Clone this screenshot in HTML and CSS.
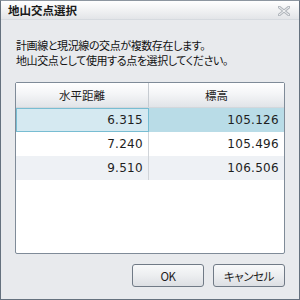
FILE: index.html
```html
<!DOCTYPE html>
<html lang="ja">

<head>
    <meta charset="UTF-8">
    <title>地山交点選択</title>
    <link rel="stylesheet" href="styles.css">
</head>

<body>
    <div class="window">
        <div class="titlebar">
            <span class="title">地山交点選択</span>
            <svg class="close" width="12" height="10" viewBox="0 0 12 10">
                <path d="M1 1 L11 9 M11 1 L1 9" stroke="#b3b8be" stroke-width="3" stroke-linecap="square" />
                <path d="M1 1 L11 9 M11 1 L1 9" stroke="#f4f5f6" stroke-width="1" />
            </svg>
        </div>

        <div class="content">
            <div class="message">
                <div class="line">計画線と現況線の交点が複数存在します。</div>
                <div class="line">地山交点として使用する点を選択してください。</div>
            </div>

            <div class="grid">
                <div class="row head">
                    <div class="cell">水平距離</div>
                    <div class="cell">標高</div>
                </div>
                <div class="row selected">
                    <div class="cell focus">6.315</div>
                    <div class="cell">105.126</div>
                </div>
                <div class="row">
                    <div class="cell">7.240</div>
                    <div class="cell">105.496</div>
                </div>
                <div class="row alt">
                    <div class="cell">9.510</div>
                    <div class="cell">106.506</div>
                </div>
            </div>

            <div class="buttons">
                <button class="btn">OK</button>
                <button class="btn">キャンセル</button>
            </div>
        </div>
    </div>
</body>

</html>
```

FILE: styles.css
```css
body {
    margin: 0;
    font-family: "Noto Sans CJK JP", "Noto Sans", sans-serif;
    font-size: 11px;
    color: #1e1e1e;
    font-feature-settings: "palt";
}

.window {
    width: 300px;
    height: 300px;
    box-sizing: border-box;
    border: 1px solid #65717e;
    border-top-color: #8d96a0;
    background: #e8eaed;
    display: flex;
    flex-direction: column;
}

.titlebar {
    height: 18px;
    display: flex;
    align-items: center;
    justify-content: space-between;
    padding: 0 9px 0 7px;
    background: linear-gradient(to bottom, #ffffff, #e3e5e8);
    border-bottom: 1px solid #d6dadf;
}

.title {
    font-weight: bold;
    font-size: 11.5px;
    color: #1a1a1a;
    line-height: 18px;
}

.close {
    margin-top: 1px;
}

.content {
    flex: 1;
    display: flex;
    flex-direction: column;
    padding: 0 14px;
}

.message {
    margin: 18px 0 14px 1px;
    color: #111111;
}

.line {
    height: 15px;
    line-height: 15px;
    font-size: 11px;
    letter-spacing: -0.4px;
    white-space: nowrap;
}

.grid {
    height: 172px;
    box-sizing: border-box;
    border: 1px solid #7f8b98;
    border-radius: 2px;
    background: #ffffff;
}

.row {
    display: flex;
    height: 24px;
}

.cell {
    box-sizing: border-box;
    padding: 0 5px;
    display: flex;
    align-items: center;
    justify-content: flex-end;
    font-family: "DejaVu Sans", sans-serif;
    font-size: 12px;
    letter-spacing: 0.3px;
}

.cell:first-child {
    width: 133px;
    border-right: 1px solid #d0d4d9;
}

.cell:last-child {
    flex: 1;
}

.head {
    height: 24px;
    background: linear-gradient(to bottom, #ffffff 0%, #f4f5f7 45%, #e1e4e8 100%);
    border-bottom: 1px solid #d3d7dc;
}

.head .cell {
    justify-content: center;
    font-family: "Noto Sans CJK JP", sans-serif;
    font-size: 11.5px;
    letter-spacing: 0;
}

.head .cell:first-child {
    border-right-color: #c6cbd1;
}

.selected .cell {
    background: #b9dce7;
}

.selected .cell.focus {
    background: #d5e9f1;
    border: 1px solid #78bdd2;
}

.alt {
    background: #eef1f5;
}

.buttons {
    display: flex;
    justify-content: flex-end;
    gap: 9px;
    margin-top: 10px;
}

.btn {
    width: 72px;
    height: 23px;
    box-sizing: border-box;
    border: 1px solid #707a86;
    border-radius: 3px;
    background: linear-gradient(to bottom, #f8f9fa 0%, #eceef0 50%, #dcdfe3 100%);
    font-family: "Noto Sans CJK JP", sans-serif;
    font-feature-settings: "palt";
    font-size: 11.5px;
    letter-spacing: -0.4px;
    color: #1e1e1e;
    padding: 0;
}
```
